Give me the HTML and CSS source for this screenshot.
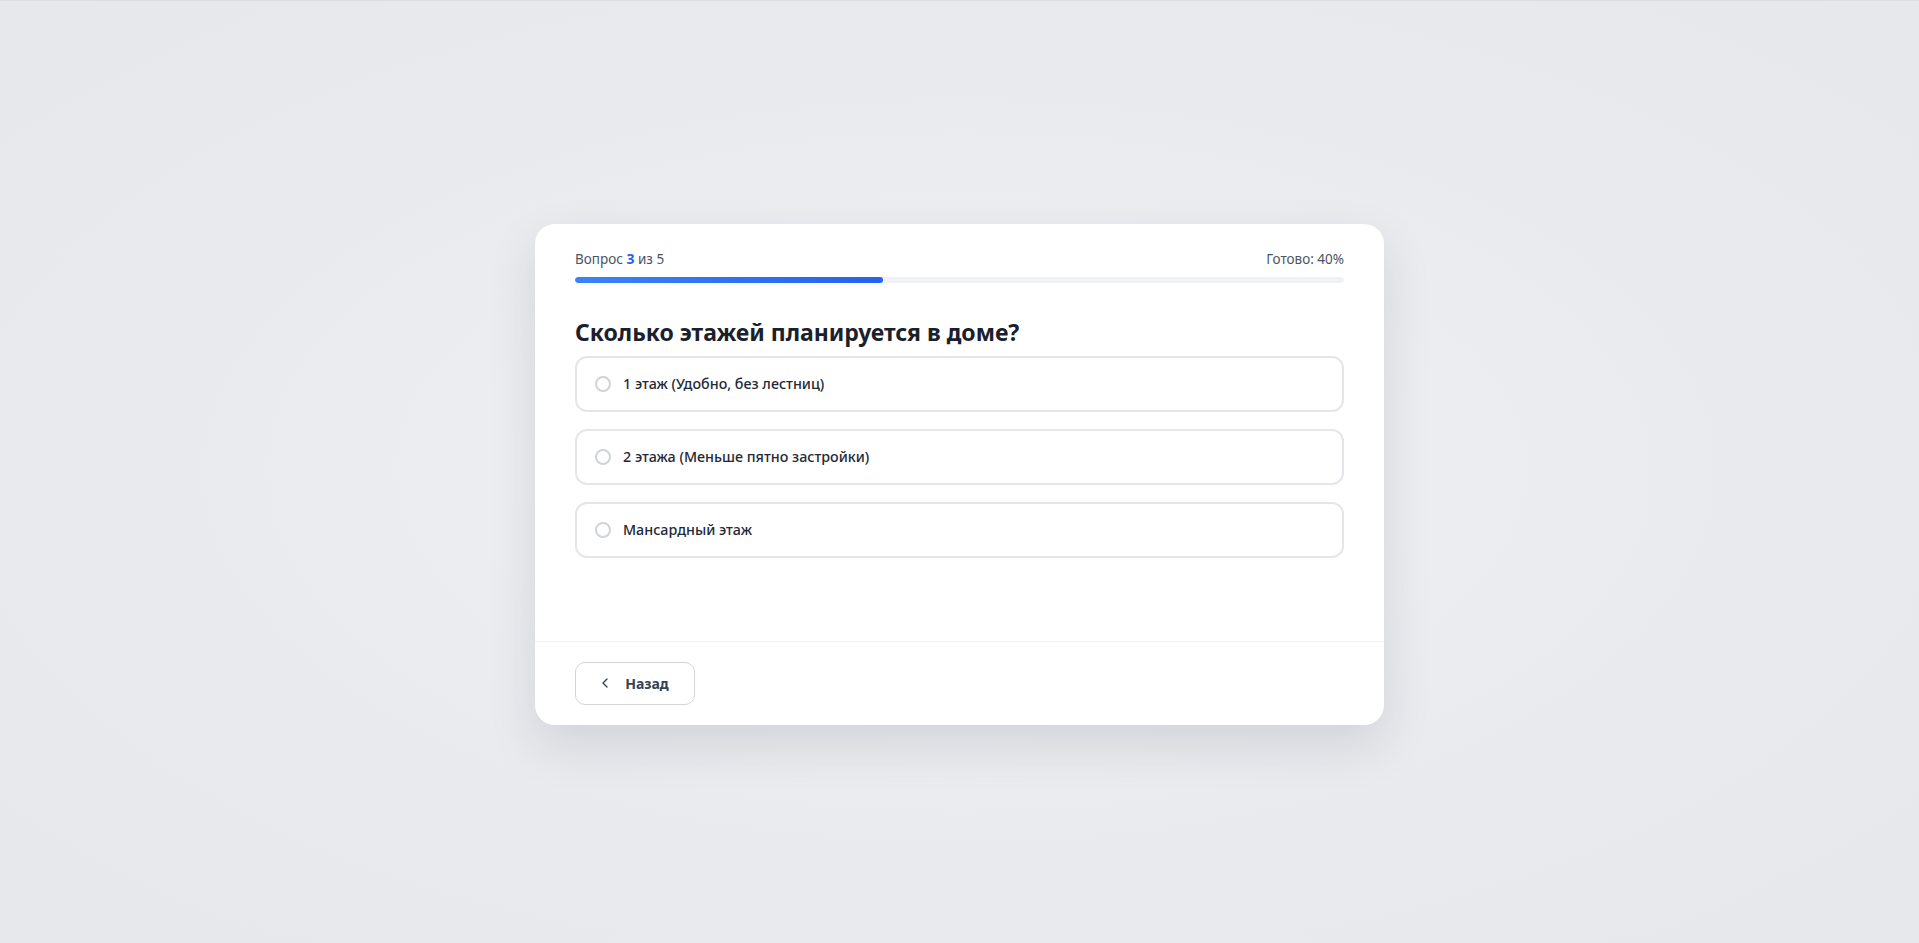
FILE: index.html
```html
<!DOCTYPE html>
<html lang="ru">
<head>
    <meta charset="UTF-8">
    <meta name="viewport" content="width=device-width, initial-scale=1.0">
    <title>Опрос</title>
    <link rel="stylesheet" href="styles.css">
</head>
<body>
    <div class="quiz">
        <div class="quiz-body">
            <div class="progress-head">
                <span>Вопрос <b>3</b> из 5</span>
                <span>Готово: 40%</span>
            </div>
            <div class="progress-track">
                <div class="progress-fill" style="width: 40%;"></div>
            </div>

            <h2 class="question">Сколько этажей планируется в доме?</h2>

            <div class="options">
                <label class="option"><span class="radio"></span>1 этаж (Удобно, без лестниц)</label>
                <label class="option"><span class="radio"></span>2 этажа (Меньше пятно застройки)</label>
                <label class="option"><span class="radio"></span>Мансардный этаж</label>
            </div>
        </div>
        <div class="quiz-footer">
            <button class="btn-back">
                <svg width="16" height="16" viewBox="0 0 24 24" fill="none" stroke="currentColor" stroke-width="2" stroke-linecap="round" stroke-linejoin="round"><path d="M15 18l-6-6 6-6"/></svg>
                Назад
            </button>
        </div>
    </div>
</body>
</html>
```

FILE: styles.css
```css
html, body {
    height: 100%;
}
body {
    margin: 0;
    border-top: 1px solid #dcdde1;
    box-sizing: border-box;
    background: radial-gradient(ellipse at center, #f1f2f4 0%, #e9eaee 60%, #e7e8ec 100%);
    font-family: "Noto Sans", "Open Sans", sans-serif;
    color: #1f2937;
    display: flex;
    align-items: center;
    justify-content: center;
}
.quiz {
    width: 849px;
    background: #fff;
    border-radius: 20px;
    box-shadow: 0 20px 50px rgba(30, 35, 60, 0.12);
    margin-top: 4px;
}
.quiz-body {
    padding: 26px 40px 83px;
}
.progress-head {
    display: flex;
    justify-content: space-between;
    font-size: 13.5px;
    line-height: 18px;
    color: #4b5563;
}
.progress-head b {
    color: #2563eb;
    font-weight: 700;
    font-size: 14px;
}
.progress-track {
    margin-top: 9px;
    height: 6px;
    border-radius: 3px;
    background: #f1f2f4;
    overflow: hidden;
}
.progress-fill {
    height: 100%;
    border-radius: 3px;
    background: linear-gradient(to right, #3b82f6, #2563eb);
}
.question {
    margin: 33px 0 8px;
    font-size: 23px;
    line-height: 32px;
    font-weight: 700;
    color: #1a202c;
}
.options {
    display: flex;
    flex-direction: column;
    gap: 17px;
}
.option {
    height: 56px;
    box-sizing: border-box;
    border: 2px solid #e5e6ea;
    border-radius: 12px;
    padding: 0 18px;
    display: flex;
    align-items: center;
    gap: 12px;
    font-size: 14.3px;
    font-weight: 500;
    color: #1f2937;
    cursor: pointer;
}
.radio {
    width: 16px;
    height: 16px;
    box-sizing: border-box;
    border: 2px solid #cfd3da;
    border-radius: 50%;
    flex-shrink: 0;
}
.quiz-footer {
    border-top: 1px solid #f0f1f3;
    padding: 20px 40px;
}
.btn-back {
    width: 120px;
    height: 43px;
    display: flex;
    align-items: center;
    justify-content: center;
    gap: 12px;
    background: #fff;
    border: 1px solid #d1d5db;
    border-radius: 10px;
    font-family: inherit;
    font-size: 14px;
    font-weight: 700;
    color: #374151;
    cursor: pointer;
}
.btn-back svg {
    margin-left: -4px;
}
```
